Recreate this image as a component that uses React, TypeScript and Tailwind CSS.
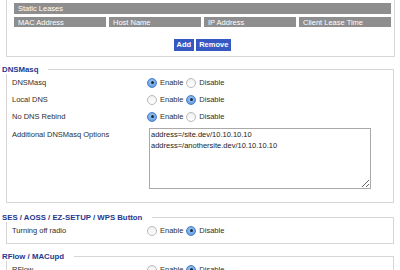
import React from 'react'

const font = { fontFamily: '"Liberation Sans", Arial, sans-serif' }

function Radio({ checked }: { checked: boolean }) {
  if (checked) {
    return (
      <span className="inline-flex items-center justify-center w-[10px] h-[10px] rounded-full border border-[#4a7fc4] bg-[radial-gradient(circle_at_50%_40%,#a9cdf3,#4b8ddd)]">
        <span className="w-[3px] h-[3px] rounded-full bg-[#1b2a45]" />
      </span>
    )
  }
  return <span className="inline-block w-[10px] h-[10px] rounded-full border border-[#b9b9b9] bg-[linear-gradient(#f0f0f0,#ffffff)]" />
}

function Choice({ on }: { on: boolean }) {
  return (
    <div className="flex items-center">
      <Radio checked={on} />
      <span className="ml-[3px] mr-[3px]">Enable</span>
      <Radio checked={!on} />
      <span className="ml-[3px]">Disable</span>
    </div>
  )
}

function Row({ label, children }: { label: string; children: React.ReactNode }) {
  return (
    <div className="flex items-center h-[17px]">
      <div className="w-[140px] pl-[5px]">{label}</div>
      {children}
    </div>
  )
}

function Section({ title, gap, children }: { title: string; gap: string; children: React.ReactNode }) {
  return (
    <fieldset className={`mx-[6px] border border-[#d6d6d6] px-0 pb-[1px] ${gap}`}>
      <legend className="ml-[-5px] pr-[10px] font-bold text-[#23388f] leading-[9px] text-[7.8px]">{title}</legend>
      {children}
    </fieldset>
  )
}

export default function App() {
  return (
    <div className="w-[400px] h-[270px] overflow-hidden bg-white text-[#2e2e2e] text-[7.5px] leading-[9px]" style={font}>
      {/* static leases box, top cut off */}
      <div className="mx-[6px] w-[389px] border-x border-b border-[#d6d6d6] pl-[7px] pr-[3px] pt-[3px] pb-[5px]">
        <div className="bg-[#8e8e8e] text-white h-[11px] flex items-center pl-[4px]">Static Leases</div>
        <div className="grid grid-cols-4 gap-[3px] mt-[3px] text-white">
          <div className="bg-[#8e8e8e] h-[10px] flex items-center pl-[4px]">MAC Address</div>
          <div className="bg-[#8e8e8e] h-[10px] flex items-center pl-[4px]">Host Name</div>
          <div className="bg-[#8e8e8e] h-[10px] flex items-center pl-[4px]">IP Address</div>
          <div className="bg-[#8e8e8e] h-[10px] flex items-center pl-[4px]">Client Lease Time</div>
        </div>
        <div className="flex justify-center gap-[2px] mt-[12px]">
          <button className="h-[12px] px-[3px] bg-[#3558c3] text-white font-bold leading-[12px]">Add</button>
          <button className="h-[12px] px-[3px] bg-[#3558c3] text-white font-bold leading-[12px]">Remove</button>
        </div>
      </div>

      <Section title="DNSMasq" gap="mt-[8px]">
        <Row label="DNSMasq"><Choice on={true} /></Row>
        <Row label="Local DNS"><Choice on={false} /></Row>
        <Row label="No DNS Rebind"><Choice on={true} /></Row>
        <div className="flex pt-[3px] pb-[12px]">
          <div className="w-[142px] pl-[5px] pt-[2px]">Additional DNSMasq Options</div>
          <textarea
            className="w-[222px] h-[61px] border border-[#a9a9a9] px-[1px] py-[1px] text-[7.5px] leading-[10.5px] text-[#222] resize-y"
            style={font}
            defaultValue={'address=/site.dev/10.10.10.10\naddress=/anothersite.dev/10.10.10.10'}
          />
        </div>
      </Section>

      <Section title="SES / AOSS / EZ-SETUP / WPS Button" gap="mt-[10px]">
        <Row label="Turning off radio"><Choice on={false} /></Row>
        <div className="h-[3px]" />
      </Section>

      <Section title="RFlow / MACupd" gap="mt-[8px]">
        <Row label="RFlow"><Choice on={false} /></Row>
        <div className="h-[4px]" />
      </Section>
    </div>
  )
}
